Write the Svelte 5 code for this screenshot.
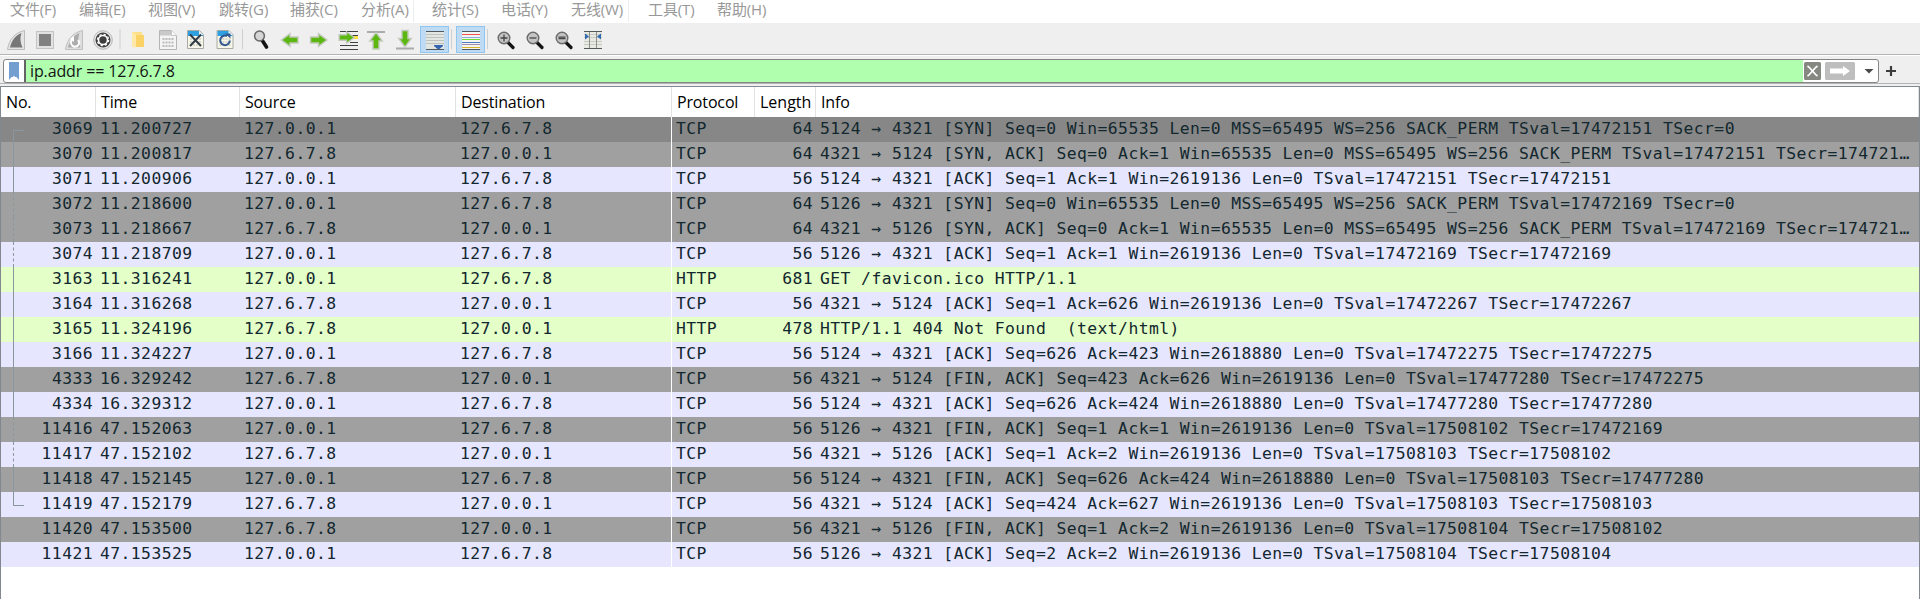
<script>
  const menus = [
    ['文件', 'F', 10, 58], ['编辑', 'E', 79, 127], ['视图', 'V', 148, 198], ['跳转', 'G', 219, 270], ['捕获', 'C', 290, 340],
    ['分析', 'A', 361, 412], ['统计', 'S', 432, 481], ['电话', 'Y', 501, 551], ['无线', 'W', 571, 627], ['工具', 'T', 648, 696], ['帮助', 'H', 717, 768]
  ];
  const spans = menus.map((m, i) => ({ name: m[0], key: m[1], gap: m[2] - (i ? menus[i - 1][3] : 0), width: m[3] - m[2], rule: i === 6 || i === 9 }));

  const A = '127.0.0.1', B = '127.6.7.8';
  const rows = [
    [3069, '11.200727', 0, 'TCP', 64, '5124 → 4321 [SYN] Seq=0 Win=65535 Len=0 MSS=65495 WS=256 SACK_PERM TSval=17472151 TSecr=0', 'selected'],
    [3070, '11.200817', 1, 'TCP', 64, '4321 → 5124 [SYN, ACK] Seq=0 Ack=1 Win=65535 Len=0 MSS=65495 WS=256 SACK_PERM TSval=17472151 TSecr=174721…', 'gray'],
    [3071, '11.200906', 0, 'TCP', 56, '5124 → 4321 [ACK] Seq=1 Ack=1 Win=2619136 Len=0 TSval=17472151 TSecr=17472151', 'tcp'],
    [3072, '11.218600', 0, 'TCP', 64, '5126 → 4321 [SYN] Seq=0 Win=65535 Len=0 MSS=65495 WS=256 SACK_PERM TSval=17472169 TSecr=0', 'gray'],
    [3073, '11.218667', 1, 'TCP', 64, '4321 → 5126 [SYN, ACK] Seq=0 Ack=1 Win=65535 Len=0 MSS=65495 WS=256 SACK_PERM TSval=17472169 TSecr=174721…', 'gray'],
    [3074, '11.218709', 0, 'TCP', 56, '5126 → 4321 [ACK] Seq=1 Ack=1 Win=2619136 Len=0 TSval=17472169 TSecr=17472169', 'tcp'],
    [3163, '11.316241', 0, 'HTTP', 681, 'GET /favicon.ico HTTP/1.1 ', 'http'],
    [3164, '11.316268', 1, 'TCP', 56, '4321 → 5124 [ACK] Seq=1 Ack=626 Win=2619136 Len=0 TSval=17472267 TSecr=17472267', 'tcp'],
    [3165, '11.324196', 1, 'HTTP', 478, 'HTTP/1.1 404 Not Found  (text/html)', 'http'],
    [3166, '11.324227', 0, 'TCP', 56, '5124 → 4321 [ACK] Seq=626 Ack=423 Win=2618880 Len=0 TSval=17472275 TSecr=17472275', 'tcp'],
    [4333, '16.329242', 1, 'TCP', 56, '4321 → 5124 [FIN, ACK] Seq=423 Ack=626 Win=2619136 Len=0 TSval=17477280 TSecr=17472275', 'gray'],
    [4334, '16.329312', 0, 'TCP', 56, '5124 → 4321 [ACK] Seq=626 Ack=424 Win=2618880 Len=0 TSval=17477280 TSecr=17477280', 'tcp'],
    [11416, '47.152063', 0, 'TCP', 56, '5126 → 4321 [FIN, ACK] Seq=1 Ack=1 Win=2619136 Len=0 TSval=17508102 TSecr=17472169', 'gray'],
    [11417, '47.152102', 1, 'TCP', 56, '4321 → 5126 [ACK] Seq=1 Ack=2 Win=2619136 Len=0 TSval=17508103 TSecr=17508102', 'tcp'],
    [11418, '47.152145', 0, 'TCP', 56, '5124 → 4321 [FIN, ACK] Seq=626 Ack=424 Win=2618880 Len=0 TSval=17508103 TSecr=17477280', 'gray'],
    [11419, '47.152179', 1, 'TCP', 56, '4321 → 5124 [ACK] Seq=424 Ack=627 Win=2619136 Len=0 TSval=17508103 TSecr=17508103', 'tcp'],
    [11420, '47.153500', 1, 'TCP', 56, '4321 → 5126 [FIN, ACK] Seq=1 Ack=2 Win=2619136 Len=0 TSval=17508104 TSecr=17508102', 'gray'],
    [11421, '47.153525', 0, 'TCP', 56, '5126 → 4321 [ACK] Seq=2 Ack=2 Win=2619136 Len=0 TSval=17508104 TSecr=17508104', 'tcp']
  ];
  const heads = ['No.', 'Time', 'Source', 'Destination', 'Protocol', 'Length', 'Info'];
  // rows of the related-conversation marker that are drawn dashed
  const dashed = [3, 4, 5, 12, 13];
</script>

{#snippet arrow(transform)}
  <path {transform} d="M-8.5 0 L0 -6.3 V-3 H8 V3 H0 V6.3 Z" fill="#5cb811" stroke="#c3c9bd" stroke-width="1.4" />
{/snippet}

{#snippet page()}
  <path d="M.5 .5 H12.5 L16.5 4.5 V18.5 H.5 Z" fill="#f7f6ea" stroke="#a9aaa2" />
  <path d="M1 1 H12 L16 5 V6 H1 Z" fill="#2e9fe0" />
  <path d="M12 .5 L16.5 5 H12 Z" fill="#e9f1f5" />
  <path d="M3 9H15M3 12H15M3 15H15" stroke="#b9bcae" stroke-dasharray="2 1" />
{/snippet}

{#snippet lens(sign)}
  <path d="M11 11.5 L16 16.500" stroke="#141414" stroke-width="3.2" stroke-linecap="round" />
  <circle cx="7" cy="7" r="5.800" fill="#c4c4c4" stroke="#6c6c6c" stroke-width="1.400" />
  <path d={sign} stroke="#444" stroke-width="1.3" fill="none" />
{/snippet}

<div class="window">
  <nav class="menu">
    {#each spans as m}
      <span class="item" class:rule={m.rule} style="width:{m.width + m.gap}px; padding-left:{m.gap}px">{m.name}({m.key})</span>
    {/each}
  </nav>

  <div class="toolbar">
    <svg width="620" height="31" viewBox="0 23 620 31">
      <path d="M7.5 49.500 C9 40 14 33 24.500 30.500 V49.500Z" fill="#e4e4e4" stroke="#bcbcbc" />
      <path d="M10 47.500 C11.500 40.500 15.500 35.500 21.500 33 Q19 40 22.500 47.500Z" fill="#777" />
      <rect x="36.500" y="31.500" width="17" height="17" fill="#e2e2e2" stroke="#c4c4c4" />
      <rect x="39" y="34" width="12" height="12" fill="#818181" />
      <path d="M65.500 49.500 C67 40 72 33 82.500 30.500 V49.500Z" fill="#dedede" stroke="#c0c0c0" />
      <path d="M68 47.500 C69.500 40.500 73.500 35.500 79.500 33 Q77 40 80.500 47.500Z" fill="#acacac" />
      <path d="M72 40 A4 4 0 1 0 78 40" stroke="#fff" stroke-width="2" fill="none" /><path d="M74 36V42L70 39Z" fill="#fff" />
      <circle cx="103" cy="40" r="9.300" fill="#e7e7e7" stroke="#b5b5b5" />
      <circle cx="103" cy="40" r="7.500" fill="#3e3e3e" />
      <circle cx="103" cy="40" r="4.500" fill="none" stroke="#fff" stroke-width="1.600" />
      <circle cx="103" cy="40" r="5.600" fill="none" stroke="#fff" stroke-width="1.300" stroke-dasharray="2.200 2.198" />
      <path d="M120 29V49M242.500 29V49M451.500 29V49M487.500 29V49" stroke="#cfcfcf" />
      <path d="M132 32H142V47H132Z" fill="#ffe08a" /><path d="M136 35H144V47H136Z" fill="#fbd266" /><path d="M132 32L136 35V48L132 46Z" fill="#ffe9a8" />
      <g transform="translate(159.500 30.500)"><path d="M0 0H12L17 5V19H0Z" fill="#f4f4f4" stroke="#b5b5b5" /><path d="M.500 .500H12V5H.500Z" fill="#c9c9c9" /><path d="M12 0V5H17" fill="#fff" stroke="#c7c7c7" /><path d="M3 8.500H15M3 12H15M3 15.500H15" stroke="#bbb" stroke-width="2" stroke-dasharray="2 1" /></g>
      <g transform="translate(187 30)">{@render page()}<path d="M3 4.500L14 16M14 4.500L3 16" stroke="#303c46" stroke-width="2" /></g>
      <g transform="translate(216.500 30)">{@render page()}<path d="M10.500 6 A4.800 4.800 0 1 0 13.300 10.500" stroke="#32588f" stroke-width="2" fill="none" /><path d="M8.500 3.500H14V8.500Z" fill="#32588f" /></g>
      <path d="M262 40L266.500 47" stroke="#151515" stroke-width="3.600" stroke-linecap="round" />
      <circle cx="259.500" cy="36" r="4.900" fill="#d5d5d5" stroke="#666" stroke-width="1.500" />
      {@render arrow('translate(290 40)')}
      {@render arrow('translate(318.500 40) rotate(180)')}
      <path d="M340 31.500H358M350 35.500H358M350 42.500H358M340 45.500H358M340 49.500H358" stroke="#3e4242" stroke-width="1.200" />
      <path d="M349 37.500H358" stroke="#ffe23d" stroke-width="3" />
      {@render arrow('translate(346.500 37.500) rotate(180) scale(.92)')}
      <path d="M367 32H385M396 48.500H414" stroke="#aaa" stroke-width="2" />
      {@render arrow('translate(376 41) rotate(90)')}
      {@render arrow('translate(405 38.500) rotate(-90)')}
      <rect x="420.500" y="26.500" width="28" height="26" fill="#bfdbf3" stroke="#8fc6f2" />
      <rect x="426" y="31" width="18" height="19" fill="#e2e5e2" />
      <path d="M426 31.500H444M426 49.500H444" stroke="#505860" />
      <path d="M426 34.500H444M426 37.500H444M426 40.500H444M426 43.500H444" stroke="#bdc2bd" />
      <path d="M434 45H443V46L439.500 49H437.500L434 46Z" fill="#3264b0" />
      <rect x="456.500" y="26.500" width="28" height="26" fill="#bfdbf3" stroke="#8fc6f2" />
      <rect x="462" y="31" width="18" height="19" fill="#f4f5f3" />
      <path d="M462 31.500H480M462 49.500H480" stroke="#505860" />
      <path d="M462 34.500H480" stroke="#f04f4c" /><path d="M462 37.500H480" stroke="#8fa9d6" /><path d="M462 39.500H480" stroke="#71d832" /><path d="M462 42.500H480" stroke="#4b7dc1" /><path d="M462 44.500H480" stroke="#a58cb0" /><path d="M462 47.500H480" stroke="#d8b42a" />
      <g transform="translate(497 31)">{@render lens('M3.500 7H10.500M7 3.500V10.500')}</g>
      <g transform="translate(526 31)">{@render lens('M3.500 7H10.500')}</g>
      <g transform="translate(555 31)">{@render lens('M3.500 6.200H10.500M3.500 7.700H10.500')}</g>
      <rect x="584" y="31" width="18" height="18" fill="#e8e9e2" />
      <path d="M584 34.500H602M584 37.500H602M584 41.500H602M584 44.500H602" stroke="#c8cbc2" />
      <path d="M584 31.500H602M584 48.500H602" stroke="#545a55" /><path d="M589.500 32V48M596.500 32V48" stroke="#8d918b" />
      <path d="M585 33.500L589 36.500L585 39.500ZM601 33.500L597 36.500L601 39.500Z" fill="#3267b2" />
    </svg>
  </div>

  <div class="filter">
    <div class="box">
      <span class="bookmark"><svg width="10" height="18"><path d="M0 0H10V18L7.500 15H6L5 13.500L4 15H2.500L0 18Z" fill="#729fcf" /></svg></span>
      <span class="query"><span>ip.addr == 127.6.7.8</span></span>
      <span class="tools">
        <svg width="74" height="20" viewBox="0 0 74 20">
          <rect x="0" y="1" width="17" height="18" rx="1.500" fill="#858781" /><path d="M3.500 5C7.500 7.500 9.500 12.500 13.500 15M13.500 5C9.500 7.500 7.500 12.500 3.500 15" stroke="#fff" stroke-width="1.700" fill="none" />
          <rect x="21" y="1" width="30" height="18" rx="1.500" fill="#bebebe" /><path d="M26 7.500H39V5L46 10L39 15V12.500H26Z" fill="#fff" />
          <path d="M60.500 8H69.500L65 12.500Z" fill="#4a4a4a" />
        </svg>
      </span>
    </div>
    <svg class="plus" width="10" height="10"><path d="M0 5H10M5 0V10" stroke="#3d3d3d" stroke-width="2.200" /></svg>
  </div>

  <div class="list">
    <div class="grid head">
      {#each heads as h}<span><b>{h}</b></span>{/each}
    </div>
    {#each rows as r, i}
      <div class="grid row {r[6]}">
        <span class="num mark">
          <i class="line" class:first={i === 0} class:last={i === 15} class:dash={dashed.includes(i)} class:none={i > 15}></i>{r[0]}
        </span>
        <span>{r[1]}</span>
        <span>{r[2] ? B : A}</span>
        <span class="dst">{r[2] ? A : B}</span>
        <span>{r[3]}</span>
        <span class="num len">{r[4]}</span>
        <span class="info">{r[5]}</span>
      </div>
    {/each}
  </div>
</div>

<style>
  :global(body) { margin: 0; overflow: hidden; background: #fff; }
  .window { width: 1920px; height: 599px; display: flex; flex-direction: column; overflow: hidden; background: #efefef; }
  .menu { height: 23px; display: flex; background: #fff; color: #989898; font: 15px/18px "Open Sans", "Noto Sans CJK SC", sans-serif; }
  .item { box-sizing: border-box; white-space: nowrap; letter-spacing: -.1px; }
  .rule { background: linear-gradient(#ededed, #ededed) 1px 0 / 1px 22px no-repeat; }
  .toolbar { height: 31px; border-bottom: 1px solid #b5b5b5; }
  .toolbar svg { display: block; }
  .filter { height: 29px; display: flex; align-items: flex-start; padding: 3px 0 0 3px; border-top: 1px solid #fff; border-bottom: 1px solid #b4b4b4; box-sizing: border-box; }
  .box { box-sizing: border-box; width: 1876px; height: 24px; border: 1px solid #858585; border-radius: 3px; display: flex; background: #fff; overflow: hidden; }
  .bookmark { width: 22px; border-right: 2px solid #646464; padding: 2px 0 0 5px; box-sizing: border-box; }
  .bookmark svg { display: block; }
  .query { width: 1777px; background: #afffaf; font: 16px/23px "Open Sans", sans-serif; letter-spacing: -.12px; color: #141414; padding-left: 4px; box-sizing: border-box; }
  .tools { padding: 1px 0 0 1px; }
  .tools svg { display: block; }
  .plus { margin: 7px 0 0 7px; }
  .list { flex: 1; margin-top: 2px; border: 1px solid #828790; border-bottom: 0; background: #fff; overflow: hidden; }
  .grid { display: grid; grid-template-columns: 95px 144px 216px 216px 83px 61px 1fr; }
  .head { height: 30px; font: 16px/30px "Open Sans", sans-serif; letter-spacing: -.15px; color: #000; }
  .head span { border-right: 1px solid #e2e2e2; padding-left: 5px; }
  .head span:nth-child(6) { letter-spacing: 0; }
  .head b { font-weight: 400; }
  .row { height: 25px; font: 16.4px/23px "DejaVu Sans Mono", monospace; letter-spacing: .412px; color: #12272e; white-space: pre; }
  .row > span { padding-left: 4px; box-sizing: border-box; overflow: hidden; }
  .num { text-align: right; }
  .row > .num { padding-right: 3px; }
  .dst { border-right: 1px solid #fff; }
  .selected { background: #878787; }
  .gray { background: #a0a0a0; }
  .tcp { background: #e7e6ff; }
  .http { background: #e4ffc7; }
  .mark { display: flex; justify-content: space-between; }
  .line { box-sizing: border-box; width: 11px; height: 25px; margin-left: 8px; border-left: 1px solid #8b979f; }
  .first { height: 12px; margin-top: 13px; border-top: 1px solid #8b979f; }
  .last { height: 14px; border-bottom: 1px solid #8b979f; }
  .dash { border-left-style: dashed; }
  .none { visibility: hidden; }
</style>
